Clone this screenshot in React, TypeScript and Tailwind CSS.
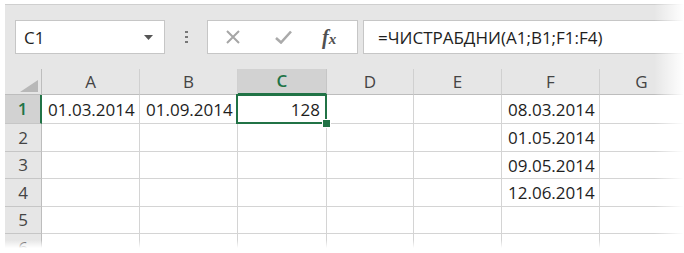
import React from "react";

const FONT = { fontFamily: '"Open Sans", "Liberation Sans", sans-serif' };

const cols = ["A", "B", "C", "D", "E", "F", "G"];
const rowHeights = ["h-[29px]", "h-[28px]", "h-[27px]", "h-[28px]", "h-[27px]", "h-[28px]"];

const data: Record<string, string> = {
  "1A": "01.03.2014",
  "1B": "01.09.2014",
  "1C": "128",
  "1F": "08.03.2014",
  "2F": "01.05.2014",
  "3F": "09.05.2014",
  "4F": "12.06.2014",
};

export default function App() {
  return (
    <div className="relative w-[684px] h-[253px] bg-white overflow-hidden text-[#1e1e1e]" style={FONT}>
      <div className="ml-[5px] mt-[4px] h-[244px] overflow-hidden bg-[#e6e6e6] border-t border-[#cfcfcf]">
        {/* Toolbar */}
        <div className="h-[64px] flex items-start pt-[15px]">
          <div className="ml-[10px] w-[150px] h-[34px] bg-white border border-[#c6c6c6] flex items-center justify-between pl-[8px] pr-[11px]">
            <span className="text-[17px] leading-none">C1</span>
            <svg width="9" height="5" viewBox="0 0 9 5">
              <path d="M0 0 L9 0 L4.5 5 Z" fill="#555" />
            </svg>
          </div>
          <div className="w-[42px] h-[34px] flex flex-col items-center justify-center gap-[3px]">
            <div className="w-[3px] h-[2px] bg-[#777]" />
            <div className="w-[3px] h-[2px] bg-[#777]" />
            <div className="w-[3px] h-[2px] bg-[#777]" />
          </div>
          <div className="w-[151px] h-[34px] bg-white border border-[#c6c6c6] flex items-center">
            <svg className="ml-[18px]" width="14" height="14" viewBox="0 0 14 14">
              <path d="M1 1 L13 13 M13 1 L1 13" stroke="#a6a6a6" strokeWidth="2" />
            </svg>
            <svg className="ml-[35px]" width="17" height="14" viewBox="0 0 17 14">
              <path d="M1 8 L6 12.5 L16 1.5" stroke="#aaaaaa" strokeWidth="2.6" fill="none" />
            </svg>
            <span
              className="ml-[30px] text-[20px] italic font-bold leading-none text-[#505050]"
              style={{ fontFamily: '"Liberation Serif", "DejaVu Serif", serif' }}
            >
              f<span className="text-[15px]">x</span>
            </span>
          </div>
          <div className="ml-[5px] flex-1 h-[34px] bg-white border border-[#c6c6c6] flex items-center pl-[14px]">
            <span className="text-[17px] leading-none">=ЧИСТРАБДНИ(A1;B1;F1:F4)</span>
          </div>
        </div>

        {/* Grid */}
        <div className="grid grid-cols-[37px_98px_98px_89px_87px_88px_98px_1fr] bg-white">
          {/* Header row */}
          <div className="h-[26px] bg-[#e6e6e6] border-r border-b border-[#bdbdbd] flex items-end justify-end pr-[3px] pb-[2px]">
            <svg width="18" height="12" viewBox="0 0 18 12">
              <path d="M18 0 L18 12 L0 12 Z" fill="#b8b8b8" />
            </svg>
          </div>
          {cols.map((c) => (
            <div
              key={c}
              className={
                c === "C"
                  ? "h-[26px] bg-[#d2d2d2] border-r border-[#c6c6c6] border-b-2 border-b-[#217346] flex items-center justify-center text-[17px] font-semibold text-[#217346]"
                  : "h-[26px] bg-[#e6e6e6] border-r border-b border-[#d0d0d0] border-b-[#bdbdbd] flex items-center justify-center text-[17px] text-[#444]"
              }
            >
              {c}
            </div>
          ))}

          {/* Data rows */}
          {rowHeights.map((h, i) => {
            const r = i + 1;
            return (
              <React.Fragment key={r}>
                <div
                  className={
                    r === 1
                      ? `${h} bg-[#d2d2d2] border-r-2 border-r-[#217346] border-b border-b-[#c6c6c6] flex items-center justify-center text-[17px] font-semibold text-[#217346]`
                      : `${h} bg-[#e6e6e6] border-r border-r-[#bdbdbd] border-b border-b-[#c6c6c6] flex items-center justify-center text-[17px] text-[#444]`
                  }
                >
                  {r}
                </div>
                {cols.map((c) => {
                  const v = data[`${r}${c}`];
                  const isNum = c === "C";
                  return (
                    <div
                      key={c}
                      className={`${h} relative border-r border-b border-[#d4d4d4] flex items-center text-[17px] ${
                        isNum ? "justify-end pr-[6px]" : "justify-start pl-[6px]"
                      }`}
                    >
                      {v && <span className="leading-none">{v}</span>}
                      {r === 1 && c === "C" && (
                        <div className="absolute z-10 -left-[2px] -top-[1px] -right-[1px] -bottom-[1px] border-2 border-[#217346] pointer-events-none">
                          <div className="absolute -right-[6px] -bottom-[6px] w-[9px] h-[9px] bg-[#217346] border border-white" />
                        </div>
                      )}
                    </div>
                  );
                })}
              </React.Fragment>
            );
          })}
        </div>
      </div>

      {/* Edge fades */}
      <div className="absolute z-20 right-0 top-0 bottom-0 w-[30px] bg-linear-to-r from-white/0 to-white pointer-events-none" />
      <div className="absolute z-20 left-0 right-0 bottom-[5px] h-[8px] bg-linear-to-b from-white/0 to-white pointer-events-none" />
    </div>
  );
}
